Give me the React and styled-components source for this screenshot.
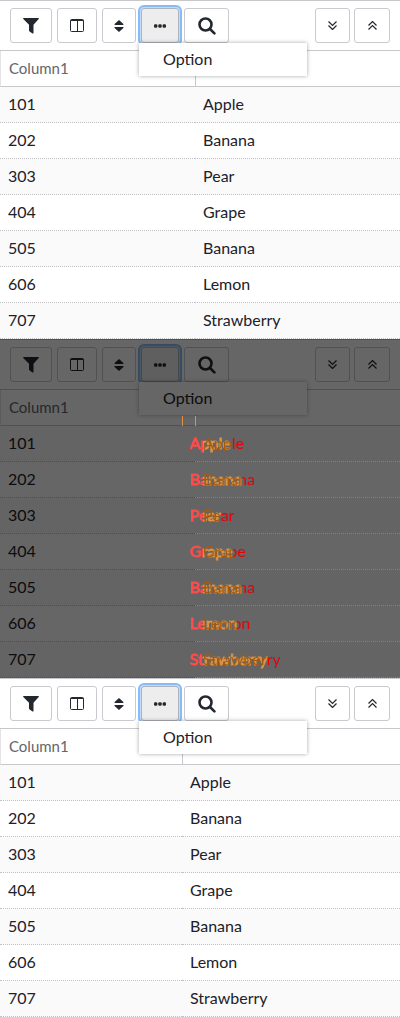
import React from "react";
import styled, { createGlobalStyle, css } from "styled-components";

const GlobalStyle = createGlobalStyle`
  *, *::before, *::after { box-sizing: border-box; }
  body {
    margin: 0;
    background: #fff;
    color: #1d2129;
    font: 16px/20px Lato, "Liberation Sans", sans-serif;
  }
`;

const Panel = styled.section`
  position: relative;
  border-top: 1px solid #c8c8cc;
`;

const Toolbar = styled.div`
  display: flex;
  align-items: center;
  justify-content: space-between;
  height: 50px;
  padding: 0 10px;
  border-bottom: 1px solid #c8c8cc;
`;

const ButtonGroup = styled.div`
  display: flex;
  gap: ${(p) => p.$gap}px;
`;

const ToolButton = styled.button`
  display: flex;
  align-items: center;
  justify-content: center;
  flex: none;
  width: ${(p) => p.$width}px;
  height: 35px;
  padding: 0;
  border: 1px solid #c9cacd;
  border-radius: 3px;
  background: #fff;
  color: #23272f;
  ${(p) =>
    p.$active &&
    css`
      background: #ededed;
      border-color: #b0b3b8;
      box-shadow: 0 0 0 1px #c4dcf6, 0 0 0 3px #85bdfc;
    `}
`;

const MenuAnchor = styled.div`
  position: relative;
`;

const Menu = styled.div`
  position: absolute;
  top: 35px;
  left: -2px;
  z-index: 1;
  width: 168px;
  background: #fff;
  box-shadow: 0 0 4px rgba(0, 0, 0, 0.35);
`;

const MenuItem = styled.button`
  display: block;
  width: 100%;
  height: 33px;
  padding: 0 24px 2px;
  border: 0;
  background: none;
  color: inherit;
  font: inherit;
  text-align: left;
`;

const Table = styled.table`
  width: 100%;
  table-layout: fixed;
  border-collapse: separate;
  border-spacing: 0;
`;

const FirstCol = styled.col`
  width: ${(p) => p.$width}px;
`;

const HeadCell = styled.th`
  height: 36px;
  padding: 0 8px 2px;
  border-left: 1px solid ${(p) => (p.$first ? "#e4e4e6" : "#c8c8cc")};
  border-bottom: 1px solid #c8c8cc;
  color: #62666c;
  font-size: 15px;
  font-weight: 400;
  text-align: left;
`;

const Row = styled.tr`
  background: ${(p) => (p.$odd ? "#fafafa" : "#fff")};
`;

const Cell = styled.td`
  height: 36px;
  padding: 0 8px 2px;
  border-bottom: 1px dotted #c2c2c4;
`;

const Shade = styled.div`
  position: absolute;
  inset: -1px 0 0;
  z-index: 2;
  background: rgba(0, 0, 0, 0.6);
`;

const DiffLayer = styled.div`
  position: absolute;
  inset: 0;
  z-index: 3;
  padding-top: 86px;
`;

const DiffRow = styled.div`
  position: relative;
  height: 36px;
  margin-left: 195px;
  border-bottom: 1px dotted #ff4b4b;
`;

const DiffText = styled.span`
  position: absolute;
  top: 7px;
  left: ${(p) => (p.$old ? 8 : -5)}px;
  color: transparent;
  background: ${(p) =>
    p.$old
      ? "linear-gradient(to left, #e80006 13px, #a85a0c 13px)"
      : "linear-gradient(to right, #ff4b4b 13px, #dc9445 13px)"};
  background-clip: text;
  -webkit-text-stroke: ${(p) => (p.$old ? "0" : "1px transparent")};
`;

const DiffTick = styled.div`
  position: absolute;
  top: 76px;
  left: ${(p) => p.$left}px;
  width: 1px;
  height: 10px;
  background: #e09044;
`;

const FilterIcon = () => (
  <svg width="16" height="16" viewBox="0 0 16 16" fill="currentColor" aria-hidden="true">
    <path d="M.6 0h14.8c.5 0 .7.6.3 1L10.500 6.800V15c0 .5-.6.7-1 .4l-3.200-2.200a.8.8 0 0 1-.3-.6V6.800L.3 1C-.1.6.1 0 .6 0z" />
  </svg>
);

const ColumnsIcon = () => (
  <svg width="14" height="13" viewBox="0 0 14 13" fill="none" stroke="currentColor" aria-hidden="true">
    <rect x=".5" y=".5" width="13" height="12" rx="1" />
    <path d="M.5 1.500h13M7.500 1v11" />
  </svg>
);

const SortIcon = () => (
  <svg width="10" height="12" viewBox="0 0 10 12" fill="currentColor" aria-hidden="true">
    <path d="M5 0l4.400 4.100c.3.4.1.9-.4.9H1C.5 5 .3 4.500.6 4.100zM5 12L.6 7.900C.3 7.500.5 7 1 7h8c.5 0 .7.500.4.900z" />
  </svg>
);

const DotsIcon = () => (
  <svg width="12" height="4" viewBox="0 0 12 4" fill="currentColor" aria-hidden="true">
    <rect x="0" y=".3" width="3.400" height="3.400" rx="1.200" />
    <rect x="4.300" y=".3" width="3.400" height="3.400" rx="1.200" />
    <rect x="8.600" y=".3" width="3.400" height="3.400" rx="1.200" />
  </svg>
);

const SearchIcon = () => (
  <svg width="18" height="18" viewBox="0 0 18 18" fill="none" stroke="currentColor" strokeWidth="2.600" strokeLinecap="round" aria-hidden="true">
    <circle cx="7.500" cy="7.500" r="6" />
    <path d="M12 12l4.400 4.400" />
  </svg>
);

const ChevronsIcon = ({ up }) => (
  <svg width="9" height="9" viewBox="0 0 9 9" fill="none" stroke="currentColor" strokeWidth="1.200" aria-hidden="true">
    <path d={up ? "M.5 4.500l4-4 4 4M.5 8.500l4-4 4 4" : "M.5.500l4 4 4-4M.5 4.500l4 4 4-4"} />
  </svg>
);

const rows = [
  ["101", "Apple"],
  ["202", "Banana"],
  ["303", "Pear"],
  ["404", "Grape"],
  ["505", "Banana"],
  ["606", "Lemon"],
  ["707", "Strawberry"],
];

function Grid({ firstWidth, diff }) {
  return (
    <Panel>
      <Toolbar>
        <ButtonGroup $gap={5}>
          <ToolButton $width={42} aria-label="Filter"><FilterIcon /></ToolButton>
          <ToolButton $width={40} aria-label="Columns"><ColumnsIcon /></ToolButton>
          <ToolButton $width={34} aria-label="Sort"><SortIcon /></ToolButton>
          <MenuAnchor>
            <ToolButton $width={38} $active aria-label="More"><DotsIcon /></ToolButton>
            <Menu><MenuItem>Option</MenuItem></Menu>
          </MenuAnchor>
          <ToolButton $width={45} aria-label="Search"><SearchIcon /></ToolButton>
        </ButtonGroup>
        <ButtonGroup $gap={4}>
          <ToolButton $width={35} aria-label="Expand all"><ChevronsIcon /></ToolButton>
          <ToolButton $width={36} aria-label="Collapse all"><ChevronsIcon up /></ToolButton>
        </ButtonGroup>
      </Toolbar>
      <Table>
        <colgroup>
          <FirstCol $width={firstWidth} />
          <col />
        </colgroup>
        <thead>
          <tr>
            <HeadCell $first>Column1</HeadCell>
            <HeadCell aria-label="Column2" />
          </tr>
        </thead>
        <tbody>
          {rows.map(([id, name], i) => (
            <Row key={id} $odd={i % 2 === 0}>
              <Cell>{id}</Cell>
              <Cell>{diff ? null : name}</Cell>
            </Row>
          ))}
        </tbody>
      </Table>
      {diff && (
        <>
          <Shade />
          <DiffLayer>
            <DiffTick $left={182} />
            <DiffTick $left={195} />
            {rows.map(([id, name]) => (
              <DiffRow key={id}>
                <DiffText>{name}</DiffText>
                <DiffText $old>{name}</DiffText>
              </DiffRow>
            ))}
          </DiffLayer>
        </>
      )}
    </Panel>
  );
}

export default function App() {
  return (
    <>
      <GlobalStyle />
      <main>
        <Grid firstWidth={195} />
        <Grid firstWidth={195} diff />
        <Grid firstWidth={182} />
      </main>
    </>
  );
}
